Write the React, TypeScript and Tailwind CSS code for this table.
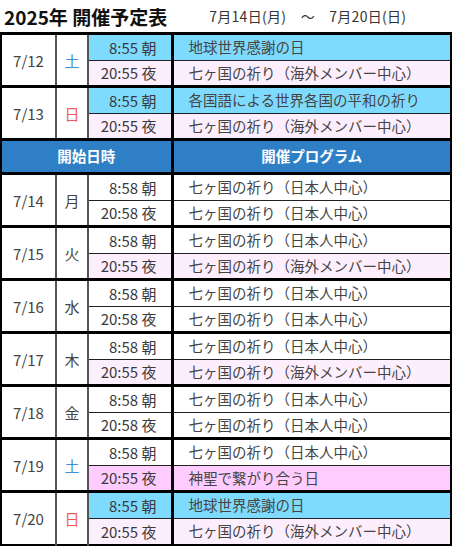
type Slot = { time: string; label: string; title: string; bg: string };
type Day = { date: string; dow: string; dowColor: string; slots: [Slot, Slot] };

const CYAN = "bg-[#7fdbfd]";
const LIGHT = "bg-[#fdeefd]";
const PINK = "bg-[#ffccff]";
const WHITE = "bg-white";

const OVERSEAS = "七ヶ国の祈り（海外メンバー中心）";
const JAPAN = "七ヶ国の祈り（日本人中心）";
const EARTH = "地球世界感謝の日";

const before: Day[] = [
  {
    date: "7/12",
    dow: "土",
    dowColor: "text-[#3d8fd6]",
    slots: [
      { time: "8:55", label: "朝", title: EARTH, bg: CYAN },
      { time: "20:55", label: "夜", title: OVERSEAS, bg: LIGHT },
    ],
  },
  {
    date: "7/13",
    dow: "日",
    dowColor: "text-[#f05a5a]",
    slots: [
      { time: "8:55", label: "朝", title: "各国語による世界各国の平和の祈り", bg: CYAN },
      { time: "20:55", label: "夜", title: OVERSEAS, bg: LIGHT },
    ],
  },
];

const week: Day[] = [
  {
    date: "7/14",
    dow: "月",
    dowColor: "text-[#444]",
    slots: [
      { time: "8:58", label: "朝", title: JAPAN, bg: WHITE },
      { time: "20:58", label: "夜", title: JAPAN, bg: WHITE },
    ],
  },
  {
    date: "7/15",
    dow: "火",
    dowColor: "text-[#444]",
    slots: [
      { time: "8:58", label: "朝", title: JAPAN, bg: WHITE },
      { time: "20:55", label: "夜", title: OVERSEAS, bg: LIGHT },
    ],
  },
  {
    date: "7/16",
    dow: "水",
    dowColor: "text-[#444]",
    slots: [
      { time: "8:58", label: "朝", title: JAPAN, bg: WHITE },
      { time: "20:58", label: "夜", title: JAPAN, bg: WHITE },
    ],
  },
  {
    date: "7/17",
    dow: "木",
    dowColor: "text-[#444]",
    slots: [
      { time: "8:58", label: "朝", title: JAPAN, bg: WHITE },
      { time: "20:55", label: "夜", title: OVERSEAS, bg: LIGHT },
    ],
  },
  {
    date: "7/18",
    dow: "金",
    dowColor: "text-[#444]",
    slots: [
      { time: "8:58", label: "朝", title: JAPAN, bg: WHITE },
      { time: "20:58", label: "夜", title: JAPAN, bg: WHITE },
    ],
  },
  {
    date: "7/19",
    dow: "土",
    dowColor: "text-[#3d8fd6]",
    slots: [
      { time: "8:58", label: "朝", title: JAPAN, bg: WHITE },
      { time: "20:55", label: "夜", title: "神聖で繋がり合う日", bg: PINK },
    ],
  },
  {
    date: "7/20",
    dow: "日",
    dowColor: "text-[#f05a5a]",
    slots: [
      { time: "8:55", label: "朝", title: EARTH, bg: CYAN },
      { time: "20:55", label: "夜", title: OVERSEAS, bg: LIGHT },
    ],
  },
];

function DayRows({ day }: { day: Day }) {
  return (
    <>
      {day.slots.map((s, i) => (
        <tr
          key={i}
          className={
            i === 0
              ? "h-[26.5px] border-t-[3px] border-black"
              : "h-[26.5px] border-t border-[#222]"
          }
        >
          {i === 0 && (
            <>
              <td
                rowSpan={2}
                className="border-r-2 border-r-[#555] bg-white text-center text-[15px] text-[#444]"
              >
                {day.date}
              </td>
              <td
                rowSpan={2}
                className={`border-r-2 border-r-[#555] bg-white text-center text-[15px] ${day.dowColor}`}
              >
                {day.dow}
              </td>
            </>
          )}
          <td className={`${s.bg} border-r-[3px] border-r-black pr-[14px] text-right text-[15px] text-[#3a3a3a]`}>
            {s.time} {s.label}
          </td>
          <td className={`${s.bg} pl-[15px] text-[14.5px] text-[#444] whitespace-nowrap`}>{s.title}</td>
        </tr>
      ))}
    </>
  );
}

export default function App() {
  return (
    <div
      className="w-[453px] bg-white"
      style={{ fontFamily: '"Noto Sans CJK JP", "Noto Sans", sans-serif' }}
    >
      <div className="flex h-[32px] items-center pl-[4px]">
        <h1 className="text-[19px] font-bold leading-none text-[#111]">2025年 開催予定表</h1>
        <p className="ml-[42px] text-[14px] leading-none tracking-[0.3px] text-[#333]">
          7月14日(月)　～　7月20日(日)
        </p>
      </div>
      <table className="w-[452px] table-fixed border-collapse border-2 border-black leading-none">
        <colgroup>
          <col className="w-[55px]" />
          <col className="w-[32px]" />
          <col className="w-[84px]" />
          <col />
        </colgroup>
        <tbody>
          {before.map((d) => (
            <DayRows key={d.date} day={d} />
          ))}
          <tr className="h-[34px] border-y-[3px] border-black bg-[#2f7fc6]">
            <td colSpan={3} className="border-r-[3px] border-r-black text-center text-[14.5px] font-bold text-white">
              開始日時
            </td>
            <td className="text-center text-[14.5px] font-bold text-white">開催プログラム</td>
          </tr>
          {week.map((d) => (
            <DayRows key={d.date} day={d} />
          ))}
        </tbody>
      </table>
    </div>
  );
}
